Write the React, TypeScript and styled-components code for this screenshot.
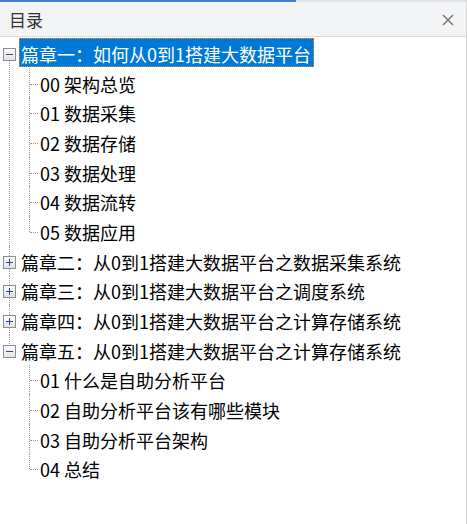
import styled, { createGlobalStyle } from "styled-components";

const GlobalStyle = createGlobalStyle`
  html, body {
    margin: 0;
    padding: 0;
    background: #ffffff;
  }
  body {
    font-family: "Noto Sans CJK SC", "Noto Sans", sans-serif;
  }
`;

type Chapter = {
  title: string;
  open: boolean;
  selected?: boolean;
  children: string[];
};

const chapters: Chapter[] = [
  {
    title: "篇章一：如何从0到1搭建大数据平台",
    open: true,
    selected: true,
    children: [
      "00 架构总览",
      "01 数据采集",
      "02 数据存储",
      "03 数据处理",
      "04 数据流转",
      "05 数据应用",
    ],
  },
  { title: "篇章二：从0到1搭建大数据平台之数据采集系统", open: false, children: [] },
  { title: "篇章三：从0到1搭建大数据平台之调度系统", open: false, children: [] },
  { title: "篇章四：从0到1搭建大数据平台之计算存储系统", open: false, children: [] },
  {
    title: "篇章五：从0到1搭建大数据平台之计算存储系统",
    open: true,
    children: [
      "01 什么是自助分析平台",
      "02 自助分析平台该有哪些模块",
      "03 自助分析平台架构",
      "04 总结",
    ],
  },
];

const ROW = 29.7;

const CloseIcon = () => (
  <svg width="12" height="12" viewBox="0 0 12 12">
    <path d="M1 1 L11 11 M11 1 L1 11" stroke="#6f6f6f" strokeWidth="1.4" />
  </svg>
);

const Expander = ({ open }: { open: boolean }) => (
  <Box>
    <svg width="11" height="11" viewBox="0 0 11 11">
      <path d="M2 5.5 H9" stroke="#2a4a8a" strokeWidth="1" />
      {!open && <path d="M5.5 2 V9" stroke="#2a4a8a" strokeWidth="1" />}
    </svg>
  </Box>
);

export default function App() {
  return (
    <>
      <GlobalStyle />
      <Panel>
        <Header>
          <Progress />
          <Title>目录</Title>
          <CloseButton>
            <CloseIcon />
          </CloseButton>
        </Header>
        <Tree>
          <TopList>
            {chapters.map((ch, i) => (
              <TopItem key={ch.title} $first={i === 0} $last={i === chapters.length - 1}>
                <TopRow>
                  <Expander open={ch.open} />
                  <Label $selected={ch.selected}>{ch.title}</Label>
                </TopRow>
                {ch.open && (
                  <ChildList>
                    {ch.children.map((c, j) => (
                      <ChildItem key={c} $last={j === ch.children.length - 1}>
                        <ChildLabel>{c}</ChildLabel>
                      </ChildItem>
                    ))}
                  </ChildList>
                )}
              </TopItem>
            ))}
          </TopList>
        </Tree>
      </Panel>
    </>
  );
}

const Panel = styled.div`
  width: 467px;
  height: 524px;
  display: flex;
  flex-direction: column;
  background: #ffffff;
  overflow: hidden;
`;

const Header = styled.div`
  position: relative;
  height: 37px;
  box-sizing: border-box;
  display: flex;
  align-items: center;
  justify-content: space-between;
  padding: 0 12px 0 9px;
  background: #f3f4f6;
  border-top: 2px solid #e4e5e8;
  border-bottom: 1px solid #dadada;
  border-right: 1px solid #d6d6d6;
`;

const Progress = styled.div`
  position: absolute;
  top: -2px;
  left: 0;
  width: 296px;
  height: 2px;
  background: #3f7fd8;
`;

const Title = styled.div`
  font-size: 17px;
  color: #333333;
  line-height: 1;
  margin-top: 1px;
`;

const CloseButton = styled.div`
  display: flex;
  align-items: center;
  justify-content: center;
  width: 12px;
  height: 12px;
  margin-top: 2px;
`;

const Tree = styled.div`
  flex: 1;
  padding-top: 1px;
  border-right: 1px solid #c8c8c8;
`;

const TopList = styled.ul`
  list-style: none;
  margin: 0;
  padding: 0;
`;

const TopItem = styled.li<{ $first?: boolean; $last?: boolean }>`
  position: relative;
  &::before {
    content: "";
    position: absolute;
    left: 9px;
    top: ${(p) => (p.$first ? `${ROW / 2}px` : "0")};
    ${(p) => (p.$last ? `height: ${ROW / 2}px;` : "bottom: 0;")}
    border-left: 1px dotted #9a9a9a;
  }
`;

const TopRow = styled.div`
  position: relative;
  height: ${ROW}px;
  display: flex;
  align-items: center;
  z-index: 1;
`;

const Box = styled.div`
  width: 13px;
  height: 13px;
  box-sizing: border-box;
  margin: 3px 3px 0 3px;
  border: 1px solid #8e8e8e;
  background: linear-gradient(180deg, #ffffff 0%, #e2e2e2 100%);
  display: flex;
  align-items: center;
  justify-content: center;
`;

const Label = styled.div<{ $selected?: boolean }>`
  height: 29px;
  box-sizing: border-box;
  display: flex;
  align-items: center;
  padding: 2px 2px 0 1px;
  font-size: 18px;
  white-space: nowrap;
  color: ${(p) => (p.$selected ? "#ffffff" : "#000000")};
  background: ${(p) => (p.$selected ? "#0078d7" : "transparent")};
  border: 1px dotted ${(p) => (p.$selected ? "#e0902a" : "transparent")};
`;

const ChildList = styled.ul`
  list-style: none;
  margin: 0;
  padding: 0;
`;

const ChildItem = styled.li<{ $last?: boolean }>`
  position: relative;
  height: ${ROW}px;
  display: flex;
  align-items: center;
  padding-left: 38px;
  &::before {
    content: "";
    position: absolute;
    left: 29px;
    top: 0;
    height: ${(p) => (p.$last ? `${ROW / 2 + 1}px` : "100%")};
    border-left: 1px dotted #9a9a9a;
  }
  &::after {
    content: "";
    position: absolute;
    left: 30px;
    top: ${ROW / 2 + 1}px;
    width: 8px;
    border-top: 1px dotted #9a9a9a;
  }
`;

const ChildLabel = styled.div`
  padding: 2px 2px 0;
  font-size: 18px;
  color: #000000;
  white-space: nowrap;
`;
